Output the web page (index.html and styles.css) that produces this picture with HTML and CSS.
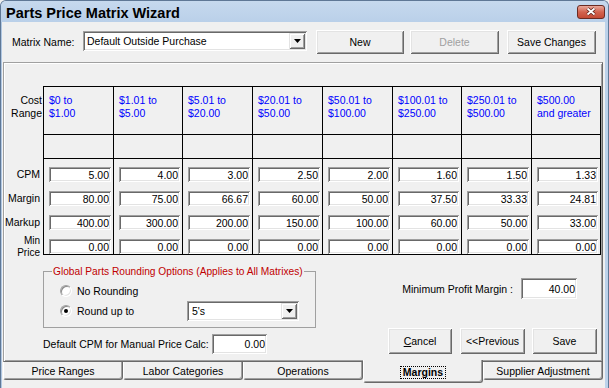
FILE: index.html
```html
<!DOCTYPE html>
<html lang="en">
<head>
  <meta charset="UTF-8">
  <title>Parts Price Matrix Wizard</title>
  <link rel="stylesheet" href="styles.css">
</head>
<body>
  <div class="window">
    <div class="titlebar">
      <span class="title">Parts Price Matrix Wizard</span>
      <span class="close-btn">
        <svg width="12" height="9" viewBox="0 0 12 9">
          <path d="M2.5 1.5L9.5 7.5M9.5 1.5L2.5 7.5" stroke="#5b2119" stroke-width="3.4"/>
          <path d="M2.5 1.5L9.5 7.5M9.5 1.5L2.5 7.5" stroke="#fff" stroke-width="1.8"/>
        </svg>
      </span>
    </div>

    <div class="client">
      <div class="top-row">
        <span class="matrix-lbl">Matrix Name:</span>
        <div class="combo matrix-combo">
          <span class="combo-text">Default Outside Purchase</span>
          <span class="combo-btn"><svg width="7" height="4" viewBox="0 0 7 4"><path d="M0 0h7L3.5 4z"/></svg></span>
        </div>
        <button class="btn btn-new">New</button>
        <button class="btn btn-delete" disabled>Delete</button>
        <button class="btn btn-changes">Save Changes</button>
      </div>

      <div class="tab-page">
        <div class="matrix">
          <div class="cost-label">Cost<br>Range</div>
          <div class="hd">$0 to<br>$1.00</div>
          <div class="hd">$1.01 to<br>$5.00</div>
          <div class="hd">$5.01 to<br>$20.00</div>
          <div class="hd">$20.01 to<br>$50.00</div>
          <div class="hd">$50.01 to<br>$100.00</div>
          <div class="hd">$100.01 to<br>$250.00</div>
          <div class="hd">$250.01 to<br>$500.00</div>
          <div class="hd">$500.00<br>and greater</div>

          <div></div>
          <div class="blank"></div>
          <div class="blank"></div>
          <div class="blank"></div>
          <div class="blank"></div>
          <div class="blank"></div>
          <div class="blank"></div>
          <div class="blank"></div>
          <div class="blank"></div>

          <div class="row-labels">
            <span>CPM</span>
            <span>Margin</span>
            <span>Markup</span>
            <span class="two-line">Min<br>Price</span>
          </div>
          <div class="vals"><input class="field" value="5.00"><input class="field" value="80.00"><input class="field" value="400.00"><input class="field" value="0.00"></div>
          <div class="vals"><input class="field" value="4.00"><input class="field" value="75.00"><input class="field" value="300.00"><input class="field" value="0.00"></div>
          <div class="vals"><input class="field" value="3.00"><input class="field" value="66.67"><input class="field" value="200.00"><input class="field" value="0.00"></div>
          <div class="vals"><input class="field" value="2.50"><input class="field" value="60.00"><input class="field" value="150.00"><input class="field" value="0.00"></div>
          <div class="vals"><input class="field" value="2.00"><input class="field" value="50.00"><input class="field" value="100.00"><input class="field" value="0.00"></div>
          <div class="vals"><input class="field" value="1.60"><input class="field" value="37.50"><input class="field" value="60.00"><input class="field" value="0.00"></div>
          <div class="vals"><input class="field" value="1.50"><input class="field" value="33.33"><input class="field" value="50.00"><input class="field" value="0.00"></div>
          <div class="vals"><input class="field" value="1.33"><input class="field" value="24.81"><input class="field" value="33.00"><input class="field" value="0.00"></div>
        </div>

        <div class="bottom">
          <div class="left-col">
            <fieldset class="group">
              <legend>Global Parts Rounding Options (Applies to All Matrixes)</legend>
              <div class="radio-row">
                <span class="radio"></span>
                <span>No Rounding</span>
              </div>
              <div class="radio-row round">
                <span class="radio checked"></span>
                <span class="radio-lbl">Round up to</span>
                <div class="combo round-combo">
                  <span class="combo-text">5's</span>
                  <span class="combo-btn"><svg width="7" height="4" viewBox="0 0 7 4"><path d="M0 0h7L3.5 4z"/></svg></span>
                </div>
              </div>
            </fieldset>
            <div class="cpm-row">
              <span class="cpm-lbl">Default CPM for Manual Price Calc:</span>
              <input class="field cpm-field" value="0.00">
            </div>
          </div>

          <div class="right-col">
            <div class="profit-row">
              <span>Minimum Profit Margin :</span>
              <input class="field profit-field" value="40.00">
            </div>
            <div class="actions">
              <button class="btn btn-cancel"><u>C</u>ancel</button>
              <button class="btn btn-prev">&lt;&lt;Previous</button>
              <button class="btn btn-save">Save</button>
            </div>
          </div>
        </div>
      </div>

      <div class="tabs">
        <div class="tab">Price Ranges</div>
        <div class="tab">Labor Categories</div>
        <div class="tab">Operations</div>
        <div class="tab active"><span class="focus">Margins</span></div>
        <div class="tab">Supplier Adjustment</div>
      </div>
    </div>
  </div>
</body>
</html>
```

FILE: styles.css
```css
body {
  margin: 0;
  font-family: "Liberation Sans", Arial, sans-serif;
  font-size: 10.5px;
  color: #000;
  background: #f0f0f0;
}

.window {
  width: 609px;
  height: 388px;
  box-sizing: border-box;
  border: 1px solid #5f7896;
  border-bottom: 0;
  border-radius: 6px 6px 0 0;
  display: flex;
  flex-direction: column;
  overflow: hidden;
  background: #bcd2ea;
}

.titlebar {
  height: 21px;
  flex: none;
  display: flex;
  align-items: center;
  justify-content: space-between;
  padding: 0 3px 0 5px;
  background: linear-gradient(#c6d9ee, #bad0e9);
}

.title {
  align-self: flex-start;
  font-size: 14.5px;
  font-weight: bold;
  line-height: 18px;
  padding-top: 3px;
}

.close-btn {
  width: 28px;
  height: 14px;
  box-sizing: border-box;
  border: 1px solid #6b2b22;
  border-radius: 3px;
  background: linear-gradient(#e9a89b, #d3634f 50%, #c44a35);
  display: flex;
  align-items: center;
  justify-content: center;
}

.client {
  flex: 1;
  background: #f0f0f0;
  border-left: 1px solid #b0c7e2;
  border-right: 3px solid #bcd2ea;
  padding-top: 8px;
}

/* top row */
.top-row {
  display: flex;
  align-items: flex-start;
  height: 24px;
  padding-left: 10px;
  margin-bottom: 8px;
}

.matrix-lbl {
  width: 71px;
  align-self: center;
}

.combo {
  box-sizing: border-box;
  height: 20px;
  padding: 2px;
  display: flex;
  background: #fff;
  box-shadow: inset 1px 1px #a0a0a0, inset -1px -1px #fff, inset 2px 2px #696969, inset -2px -2px #e3e3e3;
}

.combo-text {
  flex: 1;
  line-height: 16px;
  padding-left: 2px;
}

.combo-btn {
  width: 16px;
  height: 16px;
  box-sizing: border-box;
  background: #f0f0f0;
  display: flex;
  align-items: center;
  justify-content: center;
  box-shadow: inset 1px 1px #e3e3e3, inset -1px -1px #696969, inset 2px 2px #fff, inset -2px -2px #a0a0a0;
}

.matrix-combo {
  width: 224px;
  margin: 1px 9px 0 0;
}

.btn {
  box-sizing: border-box;
  height: 24px;
  border: 0;
  padding: 0;
  background: #f0f0f0;
  font: inherit;
  color: #000;
  box-shadow: inset 1px 1px #fff, inset -1px -1px #696969, inset 2px 2px #e3e3e3, inset -2px -2px #a0a0a0;
}

.btn:disabled {
  color: #a0a0a0;
}

.btn-new {
  width: 88px;
  margin-right: 6px;
}

.btn-delete {
  width: 89px;
  margin-right: 8px;
}

.btn-changes {
  width: 89px;
}

/* tab page */
.tab-page {
  height: 300px;
  box-sizing: border-box;
  margin: 0 2px 0 1px;
  border: 1px solid;
  border-color: #a0a0a0 #696969 #696969 #a0a0a0;
  box-shadow: inset 1px 1px #fff, inset -1px -1px #a0a0a0;
  padding: 1px;
}

.matrix {
  display: grid;
  grid-template-columns: 38px 70px 69px 70px 70px 70px 69px 70px 70px;
  grid-template-rows: 48px 24px 97px;
  margin-top: 22px;
}

.hd,
.blank,
.vals {
  border-left: 1px solid #000;
  border-top: 1px solid #000;
}

.matrix > :nth-child(9n) {
  border-right: 1px solid #000;
}

.vals {
  border-bottom: 1px solid #000;
  display: flex;
  flex-direction: column;
  gap: 9px;
  padding: 8px 2px 0 5px;
}

.hd {
  color: #0000ff;
  line-height: 13px;
  padding: 7px 0 0 5px;
  white-space: nowrap;
}

.cost-label {
  text-align: right;
  line-height: 13px;
  padding: 8px 1px 0 0;
}

.row-labels {
  display: flex;
  flex-direction: column;
  align-items: flex-end;
  gap: 9px;
  padding: 9px 3px 0 0;
}

.row-labels span {
  height: 15px;
  line-height: 15px;
  white-space: nowrap;
}

.row-labels .two-line {
  height: 23px;
  margin-top: -4px;
  font-size: 10px;
  line-height: 11.5px;
  text-align: right;
}

.field {
  box-sizing: border-box;
  height: 15px;
  width: 100%;
  margin: 0;
  border: 0;
  padding: 0 2px 0 0;
  background: #fff;
  font: inherit;
  color: #000;
  text-align: right;
  box-shadow: inset 1px 1px #a0a0a0, inset -1px -1px #fff, inset 2px 2px #696969, inset -2px -2px #e3e3e3;
}

/* lower part of the page */
.bottom {
  display: flex;
  justify-content: space-between;
  padding: 0 4px 0 38px;
}

.left-col {
  display: flex;
  flex-direction: column;
  width: 273px;
}

.group {
  margin: 10px 0 0;
  padding: 0 0 6px 16px;
  border: 1px solid #a0a0a0;
  min-width: 0;
  box-sizing: border-box;
  width: 273px;
}

.group legend {
  margin-left: -8px;
  padding: 0 1px;
  font-size: 10.2px;
  line-height: 13px;
  color: #c00000;
  white-space: nowrap;
}

.radio-row {
  display: flex;
  align-items: center;
  height: 15px;
  margin-top: 5px;
}

.radio-row.round {
  height: 20px;
  margin-top: 3px;
}

.radio {
  width: 12px;
  height: 12px;
  box-sizing: border-box;
  margin-right: 5px;
  border-radius: 50%;
  border: 1px solid;
  border-color: #a0a0a0 #fff #fff #a0a0a0;
  background: #fff;
  box-shadow: inset 1px 1px #8a8a8a, inset -1px -1px #e3e3e3;
  display: grid;
  place-items: center;
}

.radio.checked::after {
  content: "";
  width: 4px;
  height: 4px;
  border-radius: 50%;
  background: #000;
}

.radio-lbl {
  width: 110px;
}

.round-combo {
  width: 112px;
}

.round-combo .combo-text {
  padding-left: 3px;
}

.cpm-row {
  display: flex;
  align-items: center;
  height: 20px;
  margin-top: 6px;
}

.cpm-lbl {
  width: 169px;
}

.cpm-field {
  width: 55px;
  height: 20px;
}

.right-col {
  display: flex;
  flex-direction: column;
  align-items: flex-end;
}

.profit-row {
  display: flex;
  align-items: center;
  margin: 23px 20px 0 0;
}

.profit-field {
  width: 56px;
  height: 21px;
  margin-left: 8px;
}

.actions {
  display: flex;
  margin-top: 29px;
}

.actions .btn {
  height: 26px;
}

.btn-cancel {
  width: 64px;
  margin-right: 8px;
}

.btn-prev {
  width: 65px;
  margin-right: 7px;
}

.btn-save {
  width: 65px;
}

/* tabs */
.tabs {
  display: flex;
  align-items: flex-start;
  margin: 0 2px 0 1px;
}

.tab {
  flex: 1;
  height: 18px;
  box-sizing: border-box;
  padding-top: 1px;
  line-height: 16px;
  text-align: center;
  white-space: nowrap;
  background: #f0f0f0;
  border-left: 1px solid #fff;
  border-right: 1px solid #696969;
  border-bottom: 1px solid #696969;
  border-radius: 0 0 3px 3px;
  box-shadow: inset -1px -1px #a0a0a0;
}

.tab.active {
  height: 23px;
  margin-top: -2px;
  padding-top: 3px;
  font-weight: bold;
}

.focus {
  display: inline-block;
  line-height: 11px;
  padding: 0 2px;
  border: 1px dotted #000;
  vertical-align: middle;
}
```
